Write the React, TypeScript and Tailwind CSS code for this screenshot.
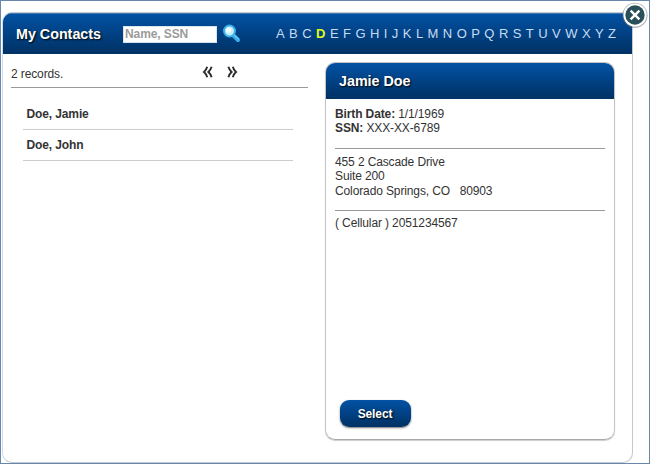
import { useState } from "react";

const LETTERS = "ABCDEFGHIJKLMNOPQRSTUVWXYZ".split("");
const CONTACTS = ["Doe, Jamie", "Doe, John"];

function SearchIcon() {
  return (
    <svg width="20" height="20" viewBox="0 0 20 20">
      <path d="M11.5 11.5 L16 16" stroke="#38b0ee" strokeWidth="4" strokeLinecap="round" />
      <path d="M12 10.8 L16.6 15" stroke="#8edcff" strokeWidth="1" strokeLinecap="round" />
      <circle cx="7.5" cy="7" r="5.5" fill="#c4edfc" stroke="#38b0ea" strokeWidth="2" />
      <circle cx="6.5" cy="6" r="2.8" fill="#eefcff" />
    </svg>
  );
}

function CloseButton({ onClick }: { onClick: () => void }) {
  return (
    <button type="button" aria-label="Close" onClick={onClick} className="absolute left-[621px] top-px h-[26px] w-[26px]">
      <svg width="26" height="26" viewBox="0 0 26 26" className="overflow-visible">
        <circle cx="13" cy="13.3" r="12.6" fill="#777777" fillOpacity="0.55" />
        <circle cx="13" cy="13" r="11.6" fill="#ffffff" />
        <circle cx="13" cy="13" r="9.7" fill="#294f59" />
        <path d="M8.6 8.6 L17.4 17.4 M17.4 8.6 L8.6 17.4" stroke="#ffffff" strokeWidth="2.4" />
      </svg>
    </button>
  );
}

function Chevrons({ flip }: { flip?: boolean }) {
  return (
    <svg width="11" height="12" viewBox="0 0 11 12" className={flip ? "-scale-x-100" : ""}>
      <path d="M5.2 0.8 Q4.3 4 2 6 Q4.3 8 5.2 11.2 M9.6 0.8 Q8.7 4 6.4 6 Q8.7 8 9.6 11.2" fill="none" stroke="#2b2b2b" strokeWidth="1.9" />
    </svg>
  );
}

export default function App() {
  const [letter, setLetter] = useState("D");
  const [open, setOpen] = useState(true);

  return (
    <div className="relative flex h-[464px] w-[650px] flex-col border border-[#6688aa] bg-white pl-px pt-[11px] font-['Liberation_Sans',Arial,sans-serif] text-[12px] leading-[14px] tracking-[-0.12px] text-[#333333]">
      {open && (
        <section className="flex h-[451px] w-[631px] flex-col overflow-hidden rounded-[10px] border border-[#c4c8ce] border-l-[#cddbea]">
          <header className="flex h-[41px] shrink-0 items-center bg-linear-to-b from-[#0352a5] to-[#003164] pl-[13px] text-white shadow-[inset_0_1px_0_#4379b4]">
            <h1 className="w-[107px] whitespace-nowrap text-[14.3px] font-bold tracking-normal [text-shadow:1px_1px_2px_#000]">My Contacts</h1>
            <input
              placeholder="Name, SSN"
              className="mt-px h-[17px] w-[94px] border border-[#d7e5ef] bg-white px-px text-[12px] font-bold tracking-[-0.1px] text-[#333333] placeholder:text-[#9b9b9b]"
            />
            <button type="button" aria-label="Search" className="ml-[5px] mt-px h-5 w-5">
              <SearchIcon />
            </button>
            <nav className="ml-[34px] mt-px flex gap-[4.45px] text-[13px] tracking-normal text-[#c7dcf2]">
              {LETTERS.map((l) => (
                <button key={l} type="button" onClick={() => setLetter(l)} className={l === letter ? "font-bold text-[#e1fa1c]" : ""}>
                  {l}
                </button>
              ))}
            </nav>
          </header>
          <div className="flex">
            <div className="ml-[8px] w-[297px]">
              <div className="flex h-[34px] items-start border-b border-[#999999]">
                <span className="mt-[13px] w-[191px]">2 records.</span>
                <button type="button" aria-label="Previous" className="mt-[12px] h-3 w-[11px]">
                  <Chevrons />
                </button>
                <button type="button" aria-label="Next" className="ml-[14px] mt-[12px] h-3 w-[11px]">
                  <Chevrons flip />
                </button>
              </div>
              <ul className="ml-[12px] mt-[11px] w-[270px]">
                {CONTACTS.map((name) => (
                  <li key={name} className="flex h-[31px] items-center border-b border-[#cccccc] pl-[3.5px] font-bold">
                    {name}
                  </li>
                ))}
              </ul>
            </div>
            <article className="ml-[17px] mt-[8px] flex h-[378px] w-[290px] flex-col overflow-hidden rounded-[10px] border border-[#c4c4c4] border-b-[#aaaaaa] shadow-[0_1px_1px_#cccccc]">
              <h2 className="flex h-[36px] shrink-0 items-center bg-linear-to-b from-[#0352a5] to-[#003164] pl-[13px] text-[14.3px] font-bold tracking-normal text-white [text-shadow:1px_1px_2px_#000]">
                Jamie Doe
              </h2>
              <div className="mx-[9px] border-b border-[#999999] pb-[12px] pt-[8px] leading-[14.4px]">
                <p><b>Birth Date:</b> 1/1/1969</p>
                <p><b>SSN:</b> XXX-XX-6789</p>
              </div>
              <div className="mx-[9px] whitespace-pre border-b border-[#999999] pb-[12px] pt-[6px] leading-[14.4px]">
                <p>455 2 Cascade Drive</p>
                <p>Suite 200</p>
                <p>Colorado Springs, CO   80903</p>
              </div>
              <p className="mx-[9px] mt-[5px]">( Cellular ) 2051234567</p>
              <button
                type="button"
                className="mb-[12px] ml-[13.5px] mt-auto h-[27px] w-[71px] rounded-[9px] bg-linear-to-b from-[#0352a5] to-[#003164] font-bold text-white shadow-[0_1px_2px_#777777] [text-shadow:1px_1px_2px_#000]"
              >
                Select
              </button>
            </article>
          </div>
        </section>
      )}
      <CloseButton onClick={() => setOpen(false)} />
    </div>
  );
}
